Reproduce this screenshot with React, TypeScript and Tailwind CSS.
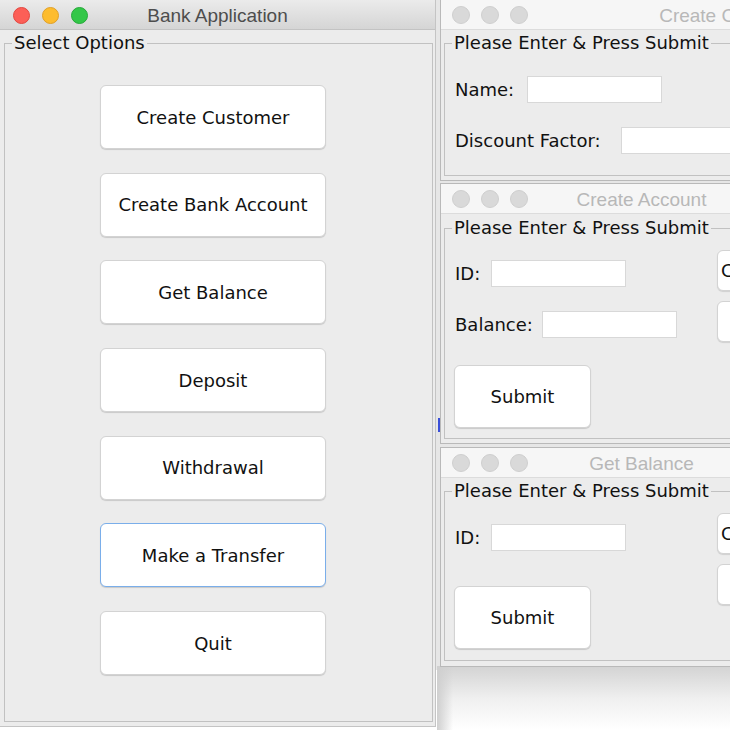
import React from "react";

const sans = "font-['DejaVu_Sans',sans-serif]";

function Lights({ active }: { active: boolean }) {
  if (!active) {
    return (
      <div className="flex items-center gap-[11px] pl-[11px] pt-[1px]">
        <span className="w-[18px] h-[18px] rounded-full bg-[#d9d9d9] border border-[#cfcfcf]" />
        <span className="w-[18px] h-[18px] rounded-full bg-[#d9d9d9] border border-[#cfcfcf]" />
        <span className="w-[18px] h-[18px] rounded-full bg-[#d9d9d9] border border-[#cfcfcf]" />
      </div>
    );
  }
  return (
    <div className="flex items-center gap-[12px] pl-[13px] pt-[2px]">
      <span className="w-[17px] h-[17px] rounded-full bg-[#fc5f57] border border-[#e2463f]" />
      <span className="w-[17px] h-[17px] rounded-full bg-[#fdbc2e] border border-[#e0a028]" />
      <span className="w-[17px] h-[17px] rounded-full bg-[#33c748] border border-[#25a939]" />
    </div>
  );
}

function TitleBar({ title, active }: { title: string; active?: boolean }) {
  return (
    <div
      className={
        active
          ? "relative h-[30px] flex items-center bg-gradient-to-b from-[#ebebeb] to-[#d5d5d5] border-b border-[#c3c3c3]"
          : "relative h-[30px] flex items-center bg-[#f6f6f6] border-b border-[#dcdcdc]"
      }
    >
      <Lights active={!!active} />
      <div
        className={
          "absolute inset-0 pt-[3px] flex items-center justify-center font-['Liberation_Sans',sans-serif] text-[19px] " +
          (active ? "text-[#4d4d4d]" : "text-[#b8b8b8]")
        }
      >
        {title}
      </div>
    </div>
  );
}

function Legend({ children }: { children: React.ReactNode }) {
  return (
    <legend className="ml-[7px] px-[2px] text-[18px] leading-[22px] text-[#111]">{children}</legend>
  );
}

function Field({ label, width = 135, gap = "gap-[11px]" }: { label: string; width?: number; gap?: string }) {
  return (
    <div className={"flex items-center h-[27px] " + gap}>
      <span className="text-[18px] text-[#111] whitespace-nowrap">{label}</span>
      <div className="h-[27px] bg-white border border-[#d8d8d8] shrink-0" style={{ width }} />
    </div>
  );
}

function SideButtons() {
  return (
    <div className="flex flex-col pt-[11px] gap-[10px]">
      <div className="w-[70px] h-[41px] bg-white rounded-[6px] border border-[#d3d3d3] shadow-[0_1px_1px_rgba(0,0,0,0.12)] flex items-center pl-[3px] text-[18px] text-[#111] overflow-hidden">
        C
      </div>
      <div className="w-[70px] h-[41px] bg-white rounded-[6px] border border-[#d3d3d3] shadow-[0_1px_1px_rgba(0,0,0,0.12)]" />
    </div>
  );
}

function SubmitButton() {
  return (
    <button className="w-[137px] h-[63px] -ml-[1px] bg-white rounded-[6px] border border-[#d3d3d3] shadow-[0_1px_1px_rgba(0,0,0,0.15)] text-[18px] text-[#111]">
      Submit
    </button>
  );
}

const options = [
  "Create Customer",
  "Create Bank Account",
  "Get Balance",
  "Deposit",
  "Withdrawal",
  "Make a Transfer",
  "Quit",
];

export default function App() {
  return (
    <div className={"relative w-[730px] h-[730px] overflow-hidden bg-white " + sans}>
      {/* backdrop strip between windows */}
      <div className="absolute left-[434px] top-0 w-[300px] h-[670px] bg-[#e6e6e6]" />
      <div className="absolute left-[437px] top-[666px] w-[300px] h-[64px] bg-gradient-to-b from-[#d3d3d3] via-[#efefef] to-white" />
      <div className="absolute left-[437px] top-[666px] w-[16px] h-[64px] bg-gradient-to-r from-[#cfcfcf] to-transparent" />

      {/* main window */}
      <div className="absolute left-0 top-0 w-[436px] h-[727px] bg-[#ececec] border-r border-[#c4c4c4] border-b">
        <TitleBar title="Bank Application" active />
        <fieldset className="mt-[2px] ml-[4px] mr-[2px] h-[690px] border border-[#c1c1c1]">
          <Legend>Select Options</Legend>
          <div className="flex flex-col gap-[23.7px] pt-[31px] pl-[95px]">
            {options.map((o) => (
              <button
                key={o}
                className={
                  "w-[226px] h-[64px] bg-white rounded-[6px] text-[18px] text-[#111] shadow-[0_1px_1px_rgba(0,0,0,0.15)] " +
                  (o === "Make a Transfer" ? "border-[1.5px] border-[#7aaeea]" : "border border-[#d3d3d3]")
                }
              >
                {o}
              </button>
            ))}
          </div>
        </fieldset>
      </div>

      <div className="absolute left-[438px] top-[418px] w-[2px] h-[14px] bg-[#3a4fd8]" />

      {/* Create Customer window */}
      <div className="absolute left-[440px] top-0 w-[582px] h-[181px] bg-[#ececec] border-l border-b border-[#b9b9b9]">
        <TitleBar title="Create Customer" />
        <fieldset className="mt-[2px] ml-[3px] h-[144px] border border-[#c1c1c1]">
          <Legend>Please Enter &amp; Press Submit</Legend>
          <div className="flex flex-col gap-[24px] pt-[22px] pl-[10px]">
            <Field label="Name:" width={135} gap="gap-[13px]" />
            <Field label="Discount Factor:" width={200} gap="gap-[20px]" />
          </div>
        </fieldset>
      </div>

      {/* Create Account window */}
      <div className="absolute left-[440px] top-[183px] w-[402px] h-[261px] bg-[#ececec] border-l border-b border-t border-[#b9b9b9]">
        <TitleBar title="Create Account" />
        <fieldset className="mt-[3px] ml-[3px] h-[222px] border border-[#c1c1c1]">
          <Legend>Please Enter &amp; Press Submit</Legend>
          <div className="flex">
            <div className="w-[272px] flex flex-col pt-[21px] pl-[10px]">
              <Field label="ID:" />
              <div className="h-[24px]" />
              <Field label="Balance:" gap="gap-[9px]" />
              <div className="h-[27px]" />
              <SubmitButton />
            </div>
            <SideButtons />
          </div>
        </fieldset>
      </div>

      {/* Get Balance window */}
      <div className="absolute left-[440px] top-[447px] w-[402px] h-[220px] bg-[#ececec] border-l border-b border-t border-[#b9b9b9]">
        <TitleBar title="Get Balance" />
        <fieldset className="mt-[2px] ml-[3px] h-[181px] border border-[#c1c1c1]">
          <Legend>Please Enter &amp; Press Submit</Legend>
          <div className="flex">
            <div className="w-[272px] flex flex-col pt-[22px] pl-[10px]">
              <Field label="ID:" />
              <div className="h-[35px]" />
              <SubmitButton />
            </div>
            <SideButtons />
          </div>
        </fieldset>
      </div>
    </div>
  );
}
